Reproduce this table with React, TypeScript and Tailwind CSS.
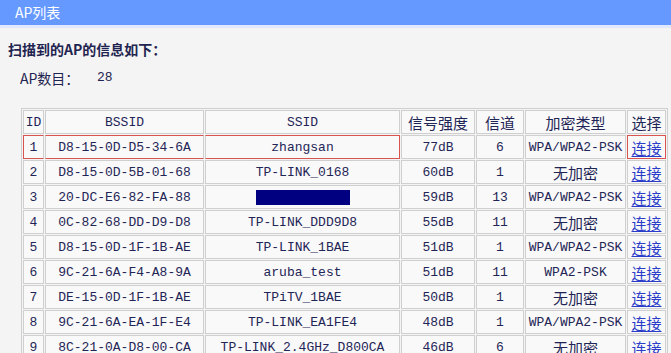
import React from 'react';

interface ApRow {
  id: number;
  bssid: string;
  ssid: string | null;
  signal: string;
  channel: number;
  security: string;
}

const rows: ApRow[] = [
  { id: 1, bssid: 'D8-15-0D-D5-34-6A', ssid: 'zhangsan', signal: '77dB', channel: 6, security: 'WPA/WPA2-PSK' },
  { id: 2, bssid: 'D8-15-0D-5B-01-68', ssid: 'TP-LINK_0168', signal: '60dB', channel: 1, security: '无加密' },
  { id: 3, bssid: '20-DC-E6-82-FA-88', ssid: null, signal: '59dB', channel: 13, security: 'WPA/WPA2-PSK' },
  { id: 4, bssid: '0C-82-68-DD-D9-D8', ssid: 'TP-LINK_DDD9D8', signal: '55dB', channel: 11, security: '无加密' },
  { id: 5, bssid: 'D8-15-0D-1F-1B-AE', ssid: 'TP-LINK_1BAE', signal: '51dB', channel: 1, security: 'WPA/WPA2-PSK' },
  { id: 6, bssid: '9C-21-6A-F4-A8-9A', ssid: 'aruba_test', signal: '51dB', channel: 11, security: 'WPA2-PSK' },
  { id: 7, bssid: 'DE-15-0D-1F-1B-AE', ssid: 'TPiTV_1BAE', signal: '50dB', channel: 1, security: '无加密' },
  { id: 8, bssid: '9C-21-6A-EA-1F-E4', ssid: 'TP-LINK_EA1FE4', signal: '48dB', channel: 1, security: 'WPA/WPA2-PSK' },
  { id: 9, bssid: '8C-21-0A-D8-00-CA', ssid: 'TP-LINK_2.4GHz_D800CA', signal: '46dB', channel: 6, security: '无加密' },
];

const mono = "font-['Liberation_Mono','Noto_Sans_CJK_SC',monospace] text-[13px]";
const cjk = "font-['Noto_Sans_CJK_SC','Liberation_Sans',sans-serif] text-[15px]";
const cell = 'border border-[#cfcfcf] bg-[#f9f9f9] text-center h-[24px] p-0 text-[#1f2656] leading-none';

export default function App() {
  return (
    <div className="w-[671px] h-[353px] overflow-hidden bg-[#f4f4f4] font-['Noto_Sans_CJK_SC',sans-serif]">
      <div className="h-[25px] bg-[#6699ff] flex items-center pl-[15px] text-white text-[14px]">AP列表</div>
      <div className="h-[3px] bg-[#dfe8ff]" />

      <div className="pl-[8px] pt-[11px] text-[14px] font-bold text-[#1f2550] leading-[20px]">扫描到的AP的信息如下：</div>
      <div className="pl-[20px] pt-[9px] flex text-[14px] text-[#1f2550] leading-[20px]">
        <span className="w-[77px]">AP数目：</span>
        <span className={mono}>28</span>
      </div>

      <table className="mt-[20px] ml-[21px] w-[647px] table-fixed border-separate border-spacing-[1px] border border-[#cfcfcf]">
        <colgroup>
          <col className="w-[21px]" />
          <col className="w-[159px]" />
          <col className="w-[195px]" />
          <col className="w-[74px]" />
          <col className="w-[48px]" />
          <col className="w-[101px]" />
          <col className="w-[39px]" />
        </colgroup>
        <thead>
          <tr>
            <th className={`${cell} ${mono} font-normal`}>ID</th>
            <th className={`${cell} ${mono} font-normal`}>BSSID</th>
            <th className={`${cell} ${mono} font-normal`}>SSID</th>
            <th className={`${cell} ${cjk} font-normal`}>信号强度</th>
            <th className={`${cell} ${cjk} font-normal`}>信道</th>
            <th className={`${cell} ${cjk} font-normal`}>加密类型</th>
            <th className={`${cell} ${cjk} font-normal`}>选择</th>
          </tr>
        </thead>
        <tbody>
          {rows.map((r) => {
            const first = r.id === 1;
            return (
              <tr key={r.id}>
                <td className={`${cell} ${mono} ${first ? 'border-[#d9534f] border-r-[#cfcfcf]' : ''}`}>{r.id}</td>
                <td className={`${cell} ${mono} ${first ? 'border-y-[#d9534f]' : ''}`}>{r.bssid}</td>
                <td className={`${cell} ${mono} ${first ? 'border-y-[#d9534f] border-r-[#d9534f]' : ''}`}>
                  {r.ssid ? (
                    r.ssid
                  ) : (
                    <div className="mx-auto w-[94px] h-[15px] bg-[#000080]" />
                  )}
                </td>
                <td className={`${cell} ${mono}`}>{r.signal}</td>
                <td className={`${cell} ${mono}`}>{r.channel}</td>
                <td className={`${cell} ${r.security === '无加密' ? cjk : mono}`}>{r.security}</td>
                <td className={`${cell} ${cjk} ${first ? 'border-[#d9534f]' : ''}`}>
                  <span className="text-[#2a3cc8] underline underline-offset-2">连接</span>
                </td>
              </tr>
            );
          })}
        </tbody>
      </table>
    </div>
  );
}
